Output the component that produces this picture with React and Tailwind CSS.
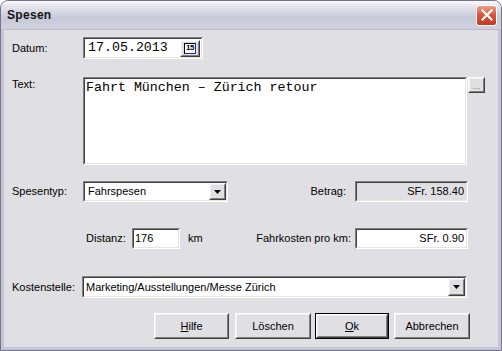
import React from 'react';

const sunkenOuter = 'border border-t-[#808080] border-l-[#808080] border-b-[#ffffff] border-r-[#ffffff]';
const sunkenInner = 'border border-t-[#404040] border-l-[#404040] border-b-[#e8e6dc] border-r-[#e8e6dc]';
const raisedOuter = 'border border-t-[#ffffff] border-l-[#ffffff] border-b-[#404040] border-r-[#404040]';
const raisedInner = 'border border-t-[#f0f0f0] border-l-[#f0f0f0] border-b-[#808080] border-r-[#808080]';

const DropArrow = () => (
  <div className={`h-full w-[17px] shrink-0 bg-[#e0dfe3] ${raisedOuter}`}>
    <div className={`flex h-full w-full items-center justify-center ${raisedInner}`}>
      <svg width="7" height="4" viewBox="0 0 7 4">
        <polygon points="0,0 7,0 3.5,4" fill="#000" />
      </svg>
    </div>
  </div>
);

const Button = ({ children, width, isDefault }) => (
  <div className={`${width} h-[26px] ${isDefault ? 'border border-black' : ''}`}>
    <div className={`h-full w-full bg-[#e0dfe3] ${raisedOuter}`}>
      <div className={`flex h-full w-full items-center justify-center ${raisedInner}`}>
        {children}
      </div>
    </div>
  </div>
);

const Label = ({ children, className = '' }) => (
  <div className={`text-[11px] leading-[13px] text-black ${className}`}>{children}</div>
);

export default function App() {
  return (
    <div className="w-[502px] h-[351px] bg-white font-['Liberation_Sans',Arial,sans-serif]">
      <div className="flex h-full w-full flex-col overflow-hidden rounded-t-[8px] border border-[#74748c] bg-[#c6c6d5]">
        {/* title bar */}
        <div className="flex h-[28px] shrink-0 items-center justify-between bg-[linear-gradient(to_bottom,#fbfbfc_0%,#e4e4ec_20%,#c7c8d8_60%,#d2d2de_100%)] pl-[6px] pr-[4px]">
          <span className="text-[12px] font-bold tracking-[0.3px] text-[#151515]">Spesen</span>
          <div className="flex h-[21px] w-[21px] items-center justify-center rounded-[3px] border border-white bg-[linear-gradient(to_bottom,#f0a08c,#d9583f_45%,#c23a22)]">
            <svg width="12" height="12" viewBox="0 0 12 12">
              <path d="M1.5 1.5 L10.5 10.5 M10.5 1.5 L1.5 10.5" stroke="#fff" strokeWidth="2.2" strokeLinecap="square" />
            </svg>
          </div>
        </div>

        {/* client area */}
        <div className="mx-[3px] mb-[3px] flex flex-1 flex-col border-t border-[#b8b8c8] bg-[#e0dfe3] pl-[8px]">
          {/* Datum */}
          <div className="mt-[7px] flex h-[22px] items-center">
            <Label className="w-[71px]">Datum:</Label>
            <div className={`h-[22px] w-[120px] ${sunkenOuter}`}>
              <div className={`flex h-full w-full items-center justify-between bg-white pl-[3px] pr-[1px] ${sunkenInner}`}>
                <span className="font-['Liberation_Mono','Courier_New',monospace] text-[13.3px] leading-[16px]">17.05.2013</span>
                <div className={`h-[17px] w-[20px] bg-[#e0dfe3] ${raisedOuter}`}>
                  <div className={`flex h-full w-full items-center justify-center ${raisedInner}`}>
                    <div className="flex h-[11px] w-[12px] items-center justify-center border border-black border-r-[#1f2fa8] border-b-[#1f2fa8] bg-white text-[8px] font-bold leading-none tracking-[-0.5px]">15</div>
                  </div>
                </div>
              </div>
            </div>
          </div>

          {/* Text */}
          <div className="mt-[18px] flex items-start">
            <Label className="w-[71px] pt-[1px]">Text:</Label>
            <div className={`h-[88px] w-[384px] ${sunkenOuter}`}>
              <div className={`h-full w-full bg-white pl-[1px] pt-[1px] font-['Liberation_Mono','Courier_New',monospace] text-[13.3px] leading-[16px] ${sunkenInner}`}>
                Fahrt München – Zürich retour
              </div>
            </div>
            <div className={`ml-[1px] h-[16px] w-[17px] bg-[#e0dfe3] ${raisedOuter}`}>
              <div className={`flex h-full w-full items-end justify-center pb-[1px] text-[9px] leading-[8px] text-[#808080] ${raisedInner}`}>...</div>
            </div>
          </div>

          {/* Spesentyp / Betrag */}
          <div className="mt-[16px] flex h-[21px] items-center">
            <Label className="w-[71px]">Spesentyp:</Label>
            <div className={`h-[21px] w-[145px] ${sunkenOuter}`}>
              <div className={`flex h-full w-full items-center bg-white pl-[3px] ${sunkenInner}`}>
                <span className="flex-1 text-[11px]">Fahrspesen</span>
                <DropArrow />
              </div>
            </div>
            <Label className="w-[118px] text-right">Betrag:</Label>
            <div className={`ml-[9px] h-[21px] w-[113px] ${sunkenOuter}`}>
              <div className={`flex h-full w-full items-center justify-end bg-[#e0dfe3] pr-[2px] text-[11px] ${sunkenInner}`}>SFr. 158.40</div>
            </div>
          </div>

          {/* Distanz / Fahrkosten */}
          <div className="mt-[26px] flex h-[21px] items-center">
            <div className="w-[74px]" />
            <Label className="w-[46px]">Distanz:</Label>
            <div className={`h-[21px] w-[48px] ${sunkenOuter}`}>
              <div className={`flex h-full w-full items-center bg-white pl-[1px] text-[11px] ${sunkenInner}`}>176</div>
            </div>
            <div className="flex w-[175px] items-center justify-between pl-[8px] pr-[4px]">
              <Label>km</Label>
              <Label>Fahrkosten pro km:</Label>
            </div>
            <div className={`h-[21px] w-[113px] ${sunkenOuter}`}>
              <div className={`flex h-full w-full items-center justify-end bg-white pr-[2px] text-[11px] ${sunkenInner}`}>SFr. 0.90</div>
            </div>
          </div>

          {/* Kostenstelle */}
          <div className="mt-[27px] flex h-[22px] items-center">
            <Label className="w-[70px]">Kostenstelle:</Label>
            <div className={`h-[22px] w-[385px] ${sunkenOuter}`}>
              <div className={`flex h-full w-full items-center bg-white pl-[2px] ${sunkenInner}`}>
                <span className="flex-1 text-[11px]">Marketing/Ausstellungen/Messe Zürich</span>
                <DropArrow />
              </div>
            </div>
          </div>

          {/* buttons */}
          <div className="mt-[15px] flex items-center pl-[142px] text-[11px]">
            <Button width="w-[75px]"><span><u>H</u>ilfe</span></Button>
            <div className="ml-[6px]"><Button width="w-[76px]">Löschen</Button></div>
            <div className="ml-[4px]"><Button width="w-[74px]" isDefault><span><u>O</u>k</span></Button></div>
            <div className="ml-[5px]"><Button width="w-[76px]">Abbrechen</Button></div>
          </div>
        </div>
      </div>
    </div>
  );
}
